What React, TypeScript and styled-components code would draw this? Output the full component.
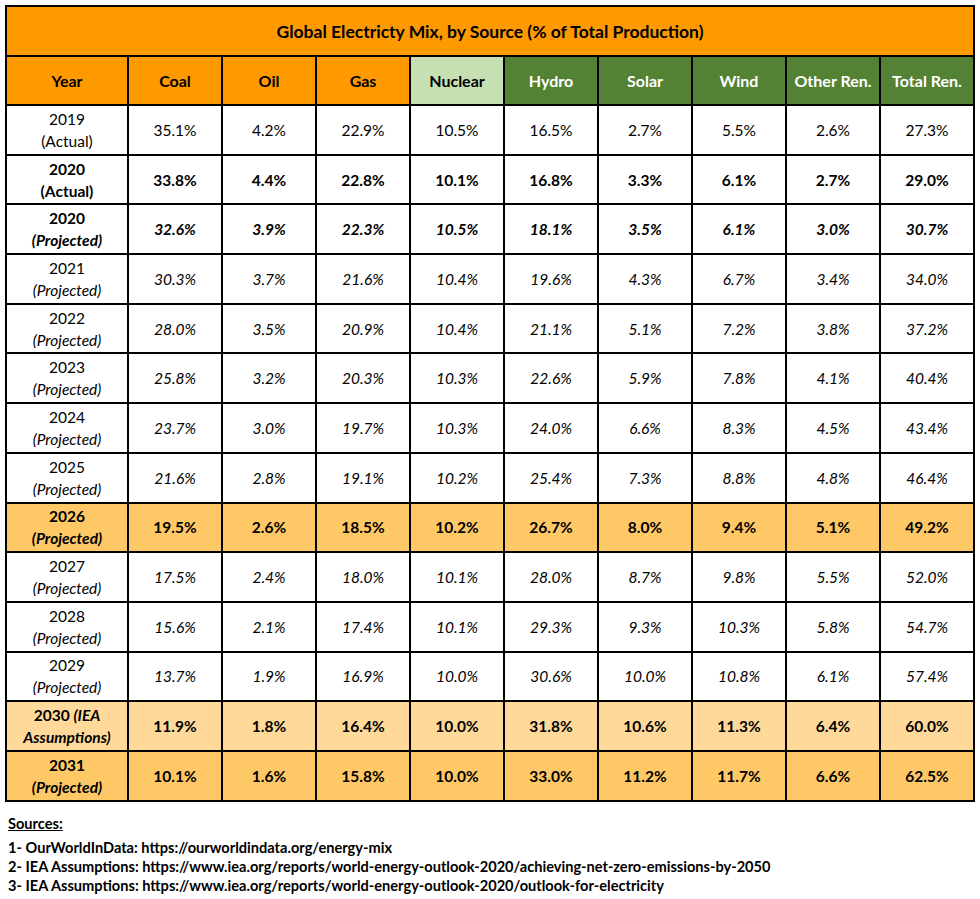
import React from "react";
import styled, { createGlobalStyle } from "styled-components";

const GlobalStyle = createGlobalStyle`
  body {
    margin: 0;
    background: #ffffff;
    font-family: Lato, "Open Sans", sans-serif;
    color: #000000;
  }
`;

const Page = styled.div`
  width: 980px;
  padding: 5px 5px 0 5px;
  box-sizing: border-box;
`;

const Table = styled.table`
  width: 970px;
  border-collapse: collapse;
  table-layout: fixed;
  border: 2px solid #000;
`;

const TitleCell = styled.th`
  height: 48px;
  background: #ff9900;
  font-size: 17.5px;
  font-weight: 700;
  text-align: center;
  border: 2px solid #000;
  padding: 0;
`;

const HeadCell = styled.th<{ $tone: "orange" | "light" | "green" }>`
  height: 47px;
  padding: 0;
  font-size: 16px;
  font-weight: 700;
  text-align: center;
  border: 2px solid #000;
  background: ${(p) =>
    p.$tone === "orange" ? "#ff9900" : p.$tone === "light" ? "#c6e0b4" : "#548235"};
  color: ${(p) => (p.$tone === "green" ? "#ffffff" : "#000000")};
`;

const Row = styled.tr<{ $bg: string }>`
  height: 49.7px;
  background: ${(p) => p.$bg};
`;

const Cell = styled.td<{ $bold: boolean; $italic: boolean }>`
  padding: 0;
  text-align: center;
  font-size: 15.5px;
  line-height: 22px;
  border: 2px solid #000;
  font-weight: ${(p) => (p.$bold ? 700 : 400)};
  font-style: ${(p) => (p.$italic ? "italic" : "normal")};
`;

const Em = styled.span`
  font-style: italic;
`;

const Sources = styled.div`
  margin-top: 12px;
  padding-left: 3px;
  font-size: 14.6px;
  font-weight: 700;
  line-height: 19px;
`;

const SourcesTitle = styled.div`
  text-decoration: underline;
  margin-bottom: 5px;
`;

type Style = "plain" | "bold" | "boldItalic" | "italic";

interface DataRow {
  year: React.ReactNode;
  values: string[];
  style: Style;
  bg?: string;
}

const HIGHLIGHT = "#ffc866";
const SOFT = "#ffd999";

const heads: { label: string; tone: "orange" | "light" | "green" }[] = [
  { label: "Year", tone: "orange" },
  { label: "Coal", tone: "orange" },
  { label: "Oil", tone: "orange" },
  { label: "Gas", tone: "orange" },
  { label: "Nuclear", tone: "light" },
  { label: "Hydro", tone: "green" },
  { label: "Solar", tone: "green" },
  { label: "Wind", tone: "green" },
  { label: "Other Ren.", tone: "green" },
  { label: "Total Ren.", tone: "green" },
];

const projected = (y: string) => (
  <>
    {y}
    <br />
    <Em>(Projected)</Em>
  </>
);

const rows: DataRow[] = [
  { year: <>2019<br />(Actual)</>, style: "plain", values: ["35.1%", "4.2%", "22.9%", "10.5%", "16.5%", "2.7%", "5.5%", "2.6%", "27.3%"] },
  { year: <>2020<br />(Actual)</>, style: "bold", values: ["33.8%", "4.4%", "22.8%", "10.1%", "16.8%", "3.3%", "6.1%", "2.7%", "29.0%"] },
  { year: projected("2020"), style: "boldItalic", values: ["32.6%", "3.9%", "22.3%", "10.5%", "18.1%", "3.5%", "6.1%", "3.0%", "30.7%"] },
  { year: projected("2021"), style: "italic", values: ["30.3%", "3.7%", "21.6%", "10.4%", "19.6%", "4.3%", "6.7%", "3.4%", "34.0%"] },
  { year: projected("2022"), style: "italic", values: ["28.0%", "3.5%", "20.9%", "10.4%", "21.1%", "5.1%", "7.2%", "3.8%", "37.2%"] },
  { year: projected("2023"), style: "italic", values: ["25.8%", "3.2%", "20.3%", "10.3%", "22.6%", "5.9%", "7.8%", "4.1%", "40.4%"] },
  { year: projected("2024"), style: "italic", values: ["23.7%", "3.0%", "19.7%", "10.3%", "24.0%", "6.6%", "8.3%", "4.5%", "43.4%"] },
  { year: projected("2025"), style: "italic", values: ["21.6%", "2.8%", "19.1%", "10.2%", "25.4%", "7.3%", "8.8%", "4.8%", "46.4%"] },
  { year: projected("2026"), style: "bold", bg: HIGHLIGHT, values: ["19.5%", "2.6%", "18.5%", "10.2%", "26.7%", "8.0%", "9.4%", "5.1%", "49.2%"] },
  { year: projected("2027"), style: "italic", values: ["17.5%", "2.4%", "18.0%", "10.1%", "28.0%", "8.7%", "9.8%", "5.5%", "52.0%"] },
  { year: projected("2028"), style: "italic", values: ["15.6%", "2.1%", "17.4%", "10.1%", "29.3%", "9.3%", "10.3%", "5.8%", "54.7%"] },
  { year: projected("2029"), style: "italic", values: ["13.7%", "1.9%", "16.9%", "10.0%", "30.6%", "10.0%", "10.8%", "6.1%", "57.4%"] },
  { year: <>2030 <Em>(IEA<br />Assumptions)</Em></>, style: "bold", bg: SOFT, values: ["11.9%", "1.8%", "16.4%", "10.0%", "31.8%", "10.6%", "11.3%", "6.4%", "60.0%"] },
  { year: projected("2031"), style: "bold", bg: HIGHLIGHT, values: ["10.1%", "1.6%", "15.8%", "10.0%", "33.0%", "11.2%", "11.7%", "6.6%", "62.5%"] },
];

const App = () => {
  return (
    <Page>
      <GlobalStyle />
      <Table>
        <colgroup>
          <col style={{ width: 122 }} />
          {heads.slice(1).map((h) => (
            <col key={h.label} />
          ))}
        </colgroup>
        <thead>
          <tr>
            <TitleCell colSpan={10}>Global Electricty Mix, by Source (% of Total Production)</TitleCell>
          </tr>
          <tr>
            {heads.map((h) => (
              <HeadCell key={h.label} $tone={h.tone}>
                {h.label}
              </HeadCell>
            ))}
          </tr>
        </thead>
        <tbody>
          {rows.map((r, i) => {
            const bold = r.style === "bold" || r.style === "boldItalic";
            const italic = r.style === "italic" || r.style === "boldItalic";
            return (
              <Row key={i} $bg={r.bg ?? "#ffffff"}>
                <Cell $bold={bold} $italic={false}>
                  {r.year}
                </Cell>
                {r.values.map((v, j) => (
                  <Cell key={j} $bold={bold} $italic={italic}>
                    {v}
                  </Cell>
                ))}
              </Row>
            );
          })}
        </tbody>
      </Table>
      <Sources>
        <SourcesTitle>Sources:</SourcesTitle>
        <div>1- OurWorldInData: https://ourworldindata.org/energy-mix</div>
        <div>2- IEA Assumptions: https://www.iea.org/reports/world-energy-outlook-2020/achieving-net-zero-emissions-by-2050</div>
        <div>3- IEA Assumptions: https://www.iea.org/reports/world-energy-outlook-2020/outlook-for-electricity</div>
      </Sources>
    </Page>
  );
};

export default App;
